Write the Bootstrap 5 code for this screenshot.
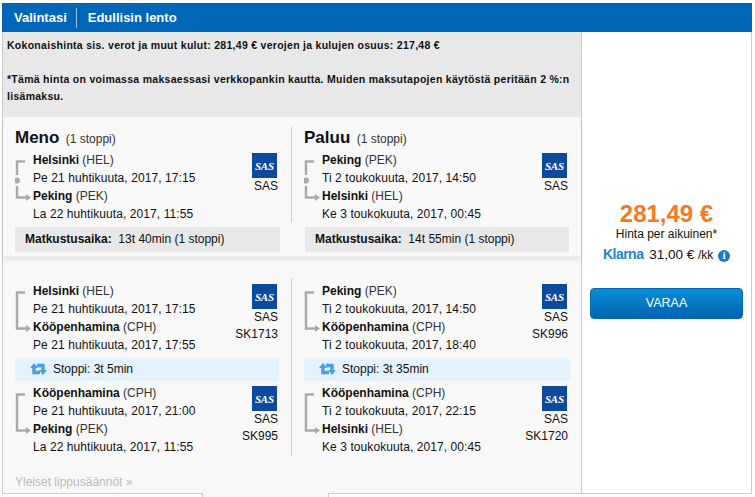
<!DOCTYPE html>
<html lang="fi">
<head>
<meta charset="utf-8">
<title>Valintasi</title>
<link href="https://cdn.jsdelivr.net/npm/bootstrap@5.3.0/dist/css/bootstrap.min.css" rel="stylesheet">
<style>
html,body{height:497px;overflow:hidden;background:#fff}
body{font-family:"Liberation Sans",Arial,sans-serif;font-size:12px;line-height:18px;color:#111}
.page-wrap{padding:3px 3px 0 2px;width:755px;height:497px}
.top-bar{height:29px;background:#0067b8;color:#fff;font-weight:700;font-size:13px;padding:0 12px}
.top-bar .ttl-a{padding-right:9px;border-right:1px solid #9cc3e2;line-height:20px;margin-right:11px}
.shell{height:462px;border:1px solid #ccc;border-top:0;position:relative}
.tab-gap{position:absolute;left:199px;bottom:-4px;width:127px;height:4px;background:#f8f8f8;border:1px solid #ccc;border-width:0 1px}
.left-pane{width:579px;border-right:1px solid #ccc;background:#f8f8f8;flex:none}
.info-box{background:#e8e8e8;height:85px;padding:5px 4px;font-weight:700;font-size:10.5px;line-height:17px;letter-spacing:.28px}
.sum-box{height:140px;padding-top:10px;box-shadow:0 3px 4px rgba(0,0,0,.08);position:relative;border-bottom:1px solid #eee}
.det-box{padding-top:21px}
.col-l{width:289px;padding:0 12px;flex:none}
.col-r{width:289px;padding:0 11px 0 12px;flex:none}
.div-wrap{border-right:1px solid #ccc;margin-right:-12px;padding-right:11px}
.sum-top{height:95px}
.det-top{padding-top:4px}
.col-h{height:21px;line-height:21px;margin-bottom:3px}
.col-h b{font-size:17px}
.col-h span{font-size:12px;margin-left:3px;color:#333}
.seg{position:relative;padding-left:18px;min-height:72px}
.rt{position:absolute;left:0;top:9px}
.city{font-weight:700}
.city span{font-weight:400;color:#333}
.dt{letter-spacing:.08px}
.carrier{text-align:right;width:60px;line-height:17px;padding-top:2px;margin-right:2px}
.logo-sas{width:25px;height:25px;display:block;margin:0 1px 0 auto}
.dur-bar{background:#e8e8e8;height:25px;line-height:24px;padding-left:10px;margin-top:5px}
.col-r .dur-bar{margin:5px 1px 0}
.stop-bar{background:#e3f2fd;height:23px;line-height:23px;padding-left:15px;margin:4px 0 3px}
.col-l .stop-bar{margin-right:1px}
.stop-bar svg{margin-right:6px;vertical-align:-2px}
.rules{color:#bbb;margin-top:17px}
.right-pane{flex:1;text-align:center;padding-top:169px;background:#fff}
.price{font-size:24px;font-weight:700;color:#f47920;line-height:26px}
.per{line-height:14px}
.klarna-row{margin-top:5px;font-size:13.5px;line-height:17px;white-space:nowrap}
.klarna-row b{color:#1a86c8;font-size:14px;margin-right:2px;letter-spacing:-.5px}
.klarna-row small{font-size:12px}
.info-i{display:inline-block;width:12px;height:12px;border-radius:50%;background:#1a7cc4;color:#fff;font:700 10px/12px "Liberation Serif",serif;text-align:center;margin-left:1px}
.btn-varaa{display:block;width:153px;height:31px;margin:24px 0 0 8px;padding:0;line-height:29px;font-size:12.500px;background:linear-gradient(#0a8ed8,#0063b0);border:1px solid #0068b4;border-radius:4px;color:#fff}
</style>
</head>
<body>
<svg width="0" height="0" class="position-absolute">
<defs>
<g id="rte"><path d="M10 1.500H2V37.500H12" fill="none" stroke="#aaa" stroke-width="2.500"/><path d="M11 34l5 3.500-5 3.500z" fill="#aaa"/></g>
<g id="rte-dot"><path d="M10 1.500H2V15M2 26V37.500H12" fill="none" stroke="#aaa" stroke-width="2.500"/><path d="M11 34l5 3.500-5 3.500z" fill="#aaa"/><circle cx="2" cy="20.500" r="3" fill="#aaa"/></g>
<g id="sas"><rect width="25" height="25" fill="#0d4a9e"/><text x="12.500" y="17" text-anchor="middle" font-family="Liberation Serif" font-style="italic" font-weight="700" font-size="11" fill="#fff" textLength="19">SAS</text></g>
<g id="rpt" fill="#4a9fe0"><path d="M4 3V9.500H10" fill="none" stroke="#4a9fe0" stroke-width="3.500"/><path d="M0 5L4 0L8 5z"/><path d="M7 2.500H13V9" fill="none" stroke="#4a9fe0" stroke-width="3.500"/><path d="M9 7L13 12L17 7z"/></g>
</defs>
</svg>
<div class="page-wrap">
<div class="top-bar d-flex align-items-center"><span class="ttl-a">Valintasi</span><span>Edullisin lento</span></div>
<div class="shell d-flex">
<div class="left-pane">
<div class="info-box">Kokonaishinta sis. verot ja muut kulut: 281,49 € verojen ja kulujen osuus: 217,48 €<br><br>*Tämä hinta on voimassa maksaessasi verkkopankin kautta. Muiden maksutapojen käytöstä peritään 2 %:n lisämaksu.</div>

<div class="sum-box d-flex">
<div class="col-l">
<div class="div-wrap sum-top">
<div class="col-h"><b>Meno</b> <span>(1 stoppi)</span></div>
<div class="seg d-flex justify-content-between">
<svg class="rt" width="20" height="46"><use href="#rte-dot"/></svg>
<div><div class="city">Helsinki <span>(HEL)</span></div><div class="dt">Pe 21 huhtikuuta, 2017, 17:15</div><div class="city">Peking <span>(PEK)</span></div><div class="dt">La 22 huhtikuuta, 2017, 11:55</div></div>
<div class="carrier"><svg class="logo-sas"><use href="#sas"/></svg>SAS</div>
</div>
</div>
<div class="dur-bar"><b>Matkustusaika:</b>&nbsp; 13t 40min (1 stoppi)</div>
</div>
<div class="col-r">
<div class="sum-top">
<div class="col-h"><b>Paluu</b> <span>(1 stoppi)</span></div>
<div class="seg d-flex justify-content-between">
<svg class="rt" width="20" height="46"><use href="#rte-dot"/></svg>
<div><div class="city">Peking <span>(PEK)</span></div><div class="dt">Ti 2 toukokuuta, 2017, 14:50</div><div class="city">Helsinki <span>(HEL)</span></div><div class="dt">Ke 3 toukokuuta, 2017, 00:45</div></div>
<div class="carrier"><svg class="logo-sas"><use href="#sas"/></svg>SAS</div>
</div>
</div>
<div class="dur-bar"><b>Matkustusaika:</b>&nbsp; 14t 55min (1 stoppi)</div>
</div>
</div>

<div class="det-box d-flex">
<div class="col-l">
<div class="div-wrap det-top">
<div class="seg d-flex justify-content-between">
<svg class="rt" width="20" height="46"><use href="#rte"/></svg>
<div><div class="city">Helsinki <span>(HEL)</span></div><div class="dt">Pe 21 huhtikuuta, 2017, 17:15</div><div class="city">Kööpenhamina <span>(CPH)</span></div><div class="dt">Pe 21 huhtikuuta, 2017, 17:55</div></div>
<div class="carrier"><svg class="logo-sas"><use href="#sas"/></svg>SAS<br>SK1713</div>
</div>
<div class="stop-bar"><svg width="17" height="12"><use href="#rpt"/></svg>Stoppi: 3t 5min</div>
<div class="seg d-flex justify-content-between">
<svg class="rt" width="20" height="46"><use href="#rte"/></svg>
<div><div class="city">Kööpenhamina <span>(CPH)</span></div><div class="dt">Pe 21 huhtikuuta, 2017, 21:00</div><div class="city">Peking <span>(PEK)</span></div><div class="dt">La 22 huhtikuuta, 2017, 11:55</div></div>
<div class="carrier"><svg class="logo-sas"><use href="#sas"/></svg>SAS<br>SK995</div>
</div>
</div>
<div class="rules">Yleiset lippusäännöt »</div>
</div>
<div class="col-r">
<div class="det-top">
<div class="seg d-flex justify-content-between">
<svg class="rt" width="20" height="46"><use href="#rte"/></svg>
<div><div class="city">Peking <span>(PEK)</span></div><div class="dt">Ti 2 toukokuuta, 2017, 14:50</div><div class="city">Kööpenhamina <span>(CPH)</span></div><div class="dt">Ti 2 toukokuuta, 2017, 18:40</div></div>
<div class="carrier"><svg class="logo-sas"><use href="#sas"/></svg>SAS<br>SK996</div>
</div>
<div class="stop-bar"><svg width="17" height="12"><use href="#rpt"/></svg>Stoppi: 3t 35min</div>
<div class="seg d-flex justify-content-between">
<svg class="rt" width="20" height="46"><use href="#rte"/></svg>
<div><div class="city">Kööpenhamina <span>(CPH)</span></div><div class="dt">Ti 2 toukokuuta, 2017, 22:15</div><div class="city">Helsinki <span>(HEL)</span></div><div class="dt">Ke 3 toukokuuta, 2017, 00:45</div></div>
<div class="carrier"><svg class="logo-sas"><use href="#sas"/></svg>SAS<br>SK1720</div>
</div>
</div>
</div>
</div>
</div>
<div class="right-pane">
<div class="price">281,49 €</div>
<div class="per">Hinta per aikuinen*</div>
<div class="klarna-row"><b>Klarna</b> 31,00 € <small>/kk</small> <span class="info-i">i</span></div>
<button type="button" class="btn btn-varaa">VARAA</button>
</div>
<div class="tab-gap"></div>
</div>
</div>
</body>
</html>
